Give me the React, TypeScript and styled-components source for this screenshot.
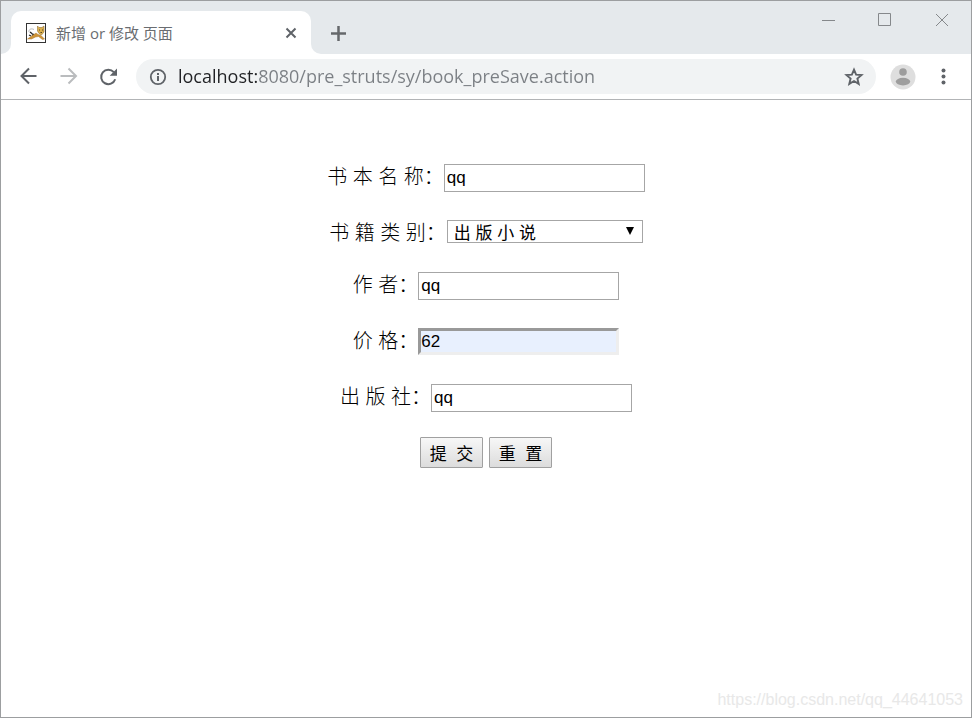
import React, { useState } from "react";
import styled, { createGlobalStyle } from "styled-components";

const GlobalStyle = createGlobalStyle`
  *, *::before, *::after { box-sizing: border-box; }
  body { margin: 0; background: #fff; }
  button, input, select { font: inherit; margin: 0; }
`;

const formFont = `"Liberation Sans", "Noto Sans CJK SC", sans-serif`;
const chromeFont = `"Open Sans", "Noto Sans CJK SC", sans-serif`;

const Window = styled.div`
  display: flex;
  flex-direction: column;
  min-height: 100vh;
  border: 1px solid #9c9ea0;
  background: #fff;
  font-family: ${formFont};
`;

const TabStrip = styled.header`
  display: flex;
  height: 53px;
`;

const StripStart = styled.div`
  width: 10px;
  background: #e5e9ec;
  border-bottom-right-radius: 10px;
`;

const TabWell = styled.div`
  display: flex;
  width: 300px;
  padding-top: 10px;
  background: linear-gradient(#e5e9ec 30px, #fff 30px);
`;

const Tab = styled.div`
  display: flex;
  flex: 1;
  align-items: center;
  gap: 10px;
  padding: 0 10px 0 15px;
  border-radius: 10px 10px 0 0;
  background: #fff;
`;

const TabTitle = styled.span`
  flex: 1;
  color: #6a6d71;
  font: 15px/20px ${chromeFont};
  white-space: nowrap;
`;

const StripEnd = styled.div`
  display: flex;
  flex: 1;
  justify-content: space-between;
  background: #e5e9ec;
  border-bottom-left-radius: 10px;
`;

const IconButton = styled.button<{ $w?: number; $h?: number }>`
  display: flex;
  flex: none;
  align-items: center;
  justify-content: center;
  width: ${(p) => p.$w ?? 40}px;
  height: ${(p) => p.$h ?? 40}px;
  padding: 0;
  border: 0;
  background: none;
  color: #5f6368;
`;

const NewTab = styled(IconButton)`
  margin: 12px 0 0 7px;
`;

const WindowControls = styled.div`
  display: flex;
`;

const Toolbar = styled.nav`
  display: flex;
  align-items: center;
  height: 46px;
  padding: 0 8px 0 7px;
  border-bottom: 1px solid #b2b4b6;
`;

const AddressBar = styled.div`
  display: flex;
  flex: 1;
  align-items: center;
  height: 35px;
  margin: 0 7px 0 8px;
  padding: 0 2px 0 13px;
  border-radius: 18px;
  background: #f1f3f4;
`;

const Address = styled.input`
  flex: 1;
  min-width: 0;
  height: 30px;
  margin-left: 11px;
  padding: 0 0 2px;
  border: 0;
  outline: 0;
  color: #7b7f84;
  background: linear-gradient(to right, #202124 79px, #7b7f84 79px);
  background-clip: text;
  -webkit-background-clip: text;
  -webkit-text-fill-color: transparent;
  font: 18px/26px ${chromeFont};
`;

const Page = styled.main`
  display: flex;
  flex: 1;
  flex-direction: column;
  justify-content: space-between;
  padding: 64px 8px 7px;
`;

const BookForm = styled.form`
  display: flex;
  flex-direction: column;
  align-items: center;
`;

const Fields = styled.div`
  display: flex;
  flex-direction: column;
  align-items: center;
  gap: 28px;
`;

const Row = styled.div<{ $h?: number }>`
  display: flex;
  align-items: flex-start;
  height: ${(p) => p.$h ?? 28}px;
`;

const Label = styled.label`
  color: #000;
  font-size: 20px;
  font-weight: 300;
  line-height: 26px;
  white-space: nowrap;
`;

const TextInput = styled.input<{ $filled?: boolean }>`
  width: 201px;
  height: ${(p) => (p.$filled ? 27 : 28)}px;
  padding: ${(p) => (p.$filled ? "0" : "0 2px")};
  border: ${(p) => (p.$filled ? "3px solid" : "1px solid")};
  border-color: ${(p) => (p.$filled ? "#999 #eee #eee #999" : "#a6a6a6")};
  border-radius: 0;
  outline: 0;
  color: #000;
  background: ${(p) => (p.$filled ? "#e8f0fe" : "#fff")};
  font-size: 17px;
`;

const SelectBox = styled.div`
  position: relative;
  width: 196px;
  height: 23px;
  margin-left: 1px;
`;

const Select = styled.select`
  display: block;
  width: 100%;
  height: 100%;
  padding: 3px 24px 0 6px;
  border: 1px solid #a6a6a6;
  border-radius: 0;
  appearance: none;
  outline: 0;
  color: #000;
  background: #fff;
  font-size: 17px;
`;

const Arrow = styled.svg`
  position: absolute;
  top: 7px;
  right: 9px;
  pointer-events: none;
`;

const Actions = styled.div`
  display: flex;
  gap: 6px;
  margin-top: 25px;
`;

const ActionButton = styled.button`
  width: 63px;
  height: 31px;
  padding: 0;
  border: 1px solid #a0a0a0;
  border-radius: 1px;
  color: #000;
  background: linear-gradient(#f7f7f7, #dcdcdc);
  font-size: 17px;
  white-space: pre;
`;

const Credit = styled.div`
  align-self: flex-end;
  color: #e8e8e8;
  font-size: 16px;
  line-height: 20px;
`;

const Favicon = () => (
  <svg width="20" height="20" viewBox="0 0 20 20" aria-hidden="true">
    <rect x=".5" y=".5" width="19" height="19" fill="#fff" stroke="#333" />
    <path d="M8 6.5C5 5 2.5 6.5 3 9" fill="none" stroke="#bbb" />
    <path d="M4 9l2.5 2M6 12.5l2-1.500M3 12l2 1" stroke="#222" strokeWidth="1.3" />
    <path d="M1.5 16l5-3.500L10 10l2 1.500 3 1 3.500 3.500-2 .5-4-3-3 .500-4 2z" fill="#cf9335" stroke="#a77a38" strokeWidth=".5" />
    <path d="M11.5 3l1.500 1.500h3l2-1.500v6l-2.500 3-2.500-1.500-1.500-2.500z" fill="#dcb04c" stroke="#947035" strokeWidth=".6" />
    <path d="M13 7h1M16 7h1M14.5 9.500h1.500" stroke="#54492c" />
  </svg>
);

const Glyph = ({ d, size = 20, color = "#5f6368", width = 2 }: {
  d: string; size?: number; color?: string; width?: number;
}) => (
  <svg width={size} height={size} viewBox={`0 0 ${size} ${size}`} fill="none" stroke={color} strokeWidth={width} aria-hidden="true">
    <path d={d} />
  </svg>
);

const Reload = () => (
  <svg width="20" height="20" viewBox="0 0 20 20" aria-hidden="true">
    <path d="M17.2 12.2A7.2 7.2 0 1 1 15.8 5.2" fill="none" stroke="#5f6368" strokeWidth="2" />
    <path d="M19 1.5v7.3h-7.3z" fill="#5f6368" />
  </svg>
);

const Info = () => (
  <svg width="18" height="18" viewBox="0 0 18 18" aria-hidden="true">
    <circle cx="9" cy="9" r="7.2" fill="none" stroke="#5f6368" strokeWidth="1.8" />
    <path d="M9 8v5M9 5v2" stroke="#5f6368" strokeWidth="2" />
  </svg>
);

const Star = () => (
  <svg width="20" height="20" viewBox="0 0 20 20" aria-hidden="true">
    <path d="M10 2.7l2.1 5 5.4.4-4.1 3.5 1.3 5.3-4.7-2.9-4.7 2.9 1.3-5.3-4.1-3.5 5.4-.4z" fill="none" stroke="#5f6368" strokeWidth="1.9" />
  </svg>
);

const Avatar = () => (
  <svg width="26" height="26" viewBox="0 0 26 26" aria-hidden="true">
    <circle cx="13" cy="13" r="12.5" fill="#dedede" />
    <circle cx="13" cy="8" r="3.8" fill="#9d9d9d" />
    <ellipse cx="13" cy="17.6" rx="7.2" ry="3.8" fill="#9d9d9d" />
  </svg>
);

const Dots = () => (
  <svg width="20" height="20" viewBox="0 0 20 20" fill="#5f6368" aria-hidden="true">
    <circle cx="10.5" cy="3.5" r="2" />
    <circle cx="10.5" cy="9.5" r="2" />
    <circle cx="10.5" cy="15.5" r="2" />
  </svg>
);

type FieldProps = { id: string; label: string; initial: string; filled?: boolean };

const Field = ({ id, label, initial, filled }: FieldProps) => (
  <Row>
    <Label htmlFor={id}>{label}</Label>
    <TextInput id={id} name={id} defaultValue={initial} $filled={filled} />
  </Row>
);

export default function App() {
  const [url, setUrl] = useState("localhost:8080/pre_struts/sy/book_preSave.action");
  return (
    <>
      <GlobalStyle />
      <Window>
        <TabStrip>
          <StripStart />
          <TabWell>
            <Tab>
              <Favicon />
              <TabTitle>新增 or 修改 页面</TabTitle>
              <IconButton $w={20} $h={20} aria-label="Close tab">
                <Glyph size={12} d="M1.5 1.5l9 9M10.5 1.5l-9 9" />
              </IconButton>
            </Tab>
          </TabWell>
          <StripEnd>
            <NewTab aria-label="New tab">
              <Glyph size={16} width={2.5} d="M8.5 1v15M1 8.5h15" color="#65686b" />
            </NewTab>
            <WindowControls>
              <IconButton $w={56} $h={37} aria-label="Minimize">
                <Glyph size={14} width={1} color="#85888b" d="M0 7.5h13" />
              </IconButton>
              <IconButton $w={56} $h={37} aria-label="Maximize">
                <Glyph size={14} width={1} color="#85888b" d="M.5 .5h12v12H.5z" />
              </IconButton>
              <IconButton $w={58} $h={37} aria-label="Close">
                <Glyph size={14} width={1} color="#85888b" d="M1 1l12 12M13 1l-12 12" />
              </IconButton>
            </WindowControls>
          </StripEnd>
        </TabStrip>
        <Toolbar>
          <IconButton aria-label="Back"><Glyph d="M18.5 9H4M11 1.5L3.5 9l7.5 7.5" /></IconButton>
          <IconButton aria-label="Forward"><Glyph color="#babcbe" d="M2.500 9h15M10.500 1.5l7.500 7.500-7.500 7.500" /></IconButton>
          <IconButton aria-label="Reload"><Reload /></IconButton>
          <AddressBar>
            <Info />
            <Address aria-label="Address" value={url} onChange={(e) => setUrl(e.target.value)} spellCheck={false} />
            <IconButton aria-label="Bookmark"><Star /></IconButton>
          </AddressBar>
          <IconButton aria-label="Profile"><Avatar /></IconButton>
          <IconButton aria-label="Menu"><Dots /></IconButton>
        </Toolbar>
        <Page>
          <BookForm onSubmit={(e) => e.preventDefault()}>
            <Fields>
              <Field id="name" label="书 本 名 称：" initial="qq" />
              <Row $h={24}>
                <Label htmlFor="type">书 籍 类 别：</Label>
                <SelectBox>
                  <Select id="type" name="type">
                    <option>出 版 小 说</option>
                  </Select>
                  <Arrow width="8" height="8" viewBox="0 0 8 8" aria-hidden="true">
                    <path d="M0 0h8L4 8z" />
                  </Arrow>
                </SelectBox>
              </Row>
              <Field id="author" label="作 者：" initial="qq" />
              <Field id="price" label="价 格：" initial="62" filled />
              <Field id="publisher" label="出 版 社：" initial="qq" />
            </Fields>
            <Actions>
              <ActionButton type="submit">提{"  "}交</ActionButton>
              <ActionButton type="reset">重{"  "}置</ActionButton>
            </Actions>
          </BookForm>
          <Credit>https://blog.csdn.net/qq_44641053</Credit>
        </Page>
      </Window>
    </>
  );
}
